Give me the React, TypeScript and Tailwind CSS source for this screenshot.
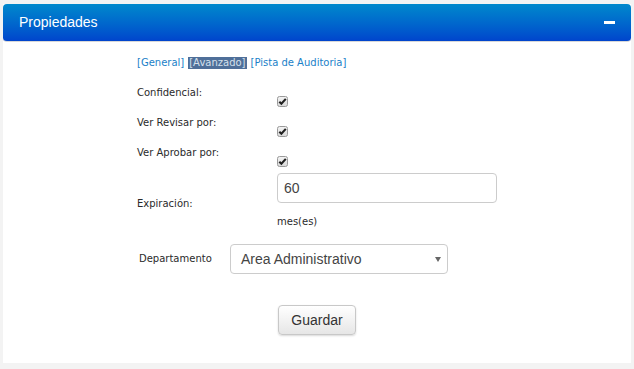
import React from "react";

function Check() {
  return (
    <svg width="11" height="11" viewBox="0 0 11 11" className="block">
      <defs>
        <linearGradient id="cbg" x1="0" y1="0" x2="0" y2="1">
          <stop offset="0" stopColor="#f4f4f4" />
          <stop offset="1" stopColor="#d9d9d9" />
        </linearGradient>
      </defs>
      <rect x="0.5" y="0.5" width="10" height="10" rx="2" fill="url(#cbg)" stroke="#9a9a9a" />
      <path d="M2.3 5.7 L4.4 7.8 L8.8 2.9" fill="none" stroke="#222" strokeWidth="2.1" />
    </svg>
  );
}

const rows = ["Confidencial:", "Ver Revisar por:", "Ver Aprobar por:"];

export default function App() {
  return (
    <div className="min-h-[369px] bg-[#f3f3f3] px-[3px] pt-[4px]">
      <div className="h-[359px] w-[628px] bg-white">
        {/* header */}
        <div className="flex h-[38px] items-center justify-between rounded-[4px] border-b border-[#d8d8d8] bg-gradient-to-b from-[#0088cc] to-[#0044cc] px-[16px]">
          <span className="text-[14px] text-white [font-family:'Liberation_Sans',Arial,sans-serif]">Propiedades</span>
          <span className="block h-[3px] w-[11px] bg-white" />
        </div>

        <div className="flex flex-col text-[#2a2a2a] [font-family:'DejaVu_Sans',Verdana,sans-serif]">
          <div className="pl-[134px] pt-[15px]">
            {/* tabs */}
            <div className="flex text-[10px] leading-[12px] text-[#1a7fc8]">
              <span>[General]</span>
              <span className="ml-[4px] bg-[#4f6f99] px-[1px] text-[#d4e0ec]">[Avanzado]</span>
              <span className="ml-[4px]">[Pista de Auditoria]</span>
            </div>

            {/* checkbox rows */}
            <div className="mt-[18px] flex flex-col gap-[10px]">
              {rows.map((r) => (
                <div key={r} className="flex items-start">
                  <span className="w-[140px] text-[10px] leading-[12px]">{r}</span>
                  <span className="mt-[9px]">
                    <Check />
                  </span>
                </div>
              ))}
            </div>

            {/* expiracion */}
            <div className="mt-[6px] flex items-start">
              <span className="mt-[25px] w-[140px] text-[10px] leading-[12px]">Expiración:</span>
              <div className="flex flex-col">
                <div className="flex h-[30px] w-[220px] items-center rounded-[4px] border border-[#cccccc] px-[6px] text-[14px] text-[#444] [font-family:'Liberation_Sans',Arial,sans-serif]">
                  60
                </div>
                <span className="mt-[13px] text-[10px] leading-[12px]">mes(es)</span>
              </div>
            </div>

            {/* departamento */}
            <div className="mt-[16px] flex items-center pl-[2px]">
              <span className="w-[91px] text-[10px] leading-[12px]">Departamento</span>
              <div className="flex h-[30px] w-[218px] items-center justify-between rounded-[4px] border border-[#cccccc] pl-[10px] pr-[6px] text-[14px] text-[#444] [font-family:'Liberation_Sans',Arial,sans-serif]">
                <span>Area Administrativo</span>
                <svg width="6" height="5" viewBox="0 0 6 5">
                  <path d="M0 0 H6 L3 5 Z" fill="#666" />
                </svg>
              </div>
            </div>
          </div>

          {/* guardar */}
          <div className="mt-[31px] flex justify-center">
            <button className="h-[30px] w-[78px] rounded-[4px] border border-[#c8c8c8] bg-gradient-to-b from-white to-[#e6e6e6] text-[14px] text-[#333] shadow-[0_1px_2px_rgba(0,0,0,0.15)] [font-family:'Liberation_Sans',Arial,sans-serif]">
              Guardar
            </button>
          </div>
        </div>
      </div>
    </div>
  );
}
